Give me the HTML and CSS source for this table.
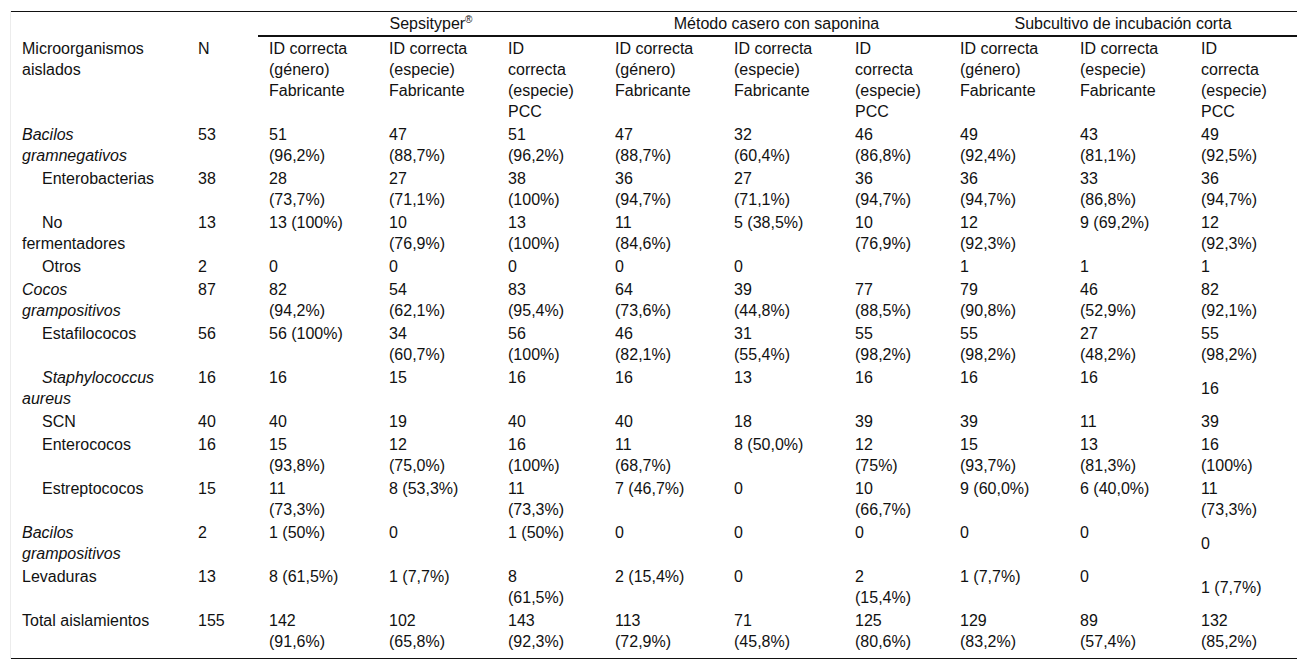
FILE: index.html
```html
<!DOCTYPE html>
<html lang="es">
<head>
<meta charset="utf-8">
<title>Tabla</title>
<link rel="stylesheet" href="styles.css">
</head>
<body>
<table class="tbl">
  <colgroup>
    <col class="c-name">
    <col class="c-n">
    <col class="c-a">
    <col class="c-b">
    <col class="c-c">
    <col class="c-d">
    <col class="c-e">
    <col class="c-f">
    <col class="c-g">
    <col class="c-h">
    <col class="c-i">
  </colgroup>
  <thead>
    <tr class="grp-row">
      <th></th>
      <th></th>
      <th class="grp" colspan="3">Sepsityper<sup>®</sup></th>
      <th class="grp" colspan="3">Método casero con saponina</th>
      <th class="grp" colspan="3">Subcultivo de incubación corta</th>
    </tr>
    <tr>
      <th>Microorganismos<br>aislados</th>
      <th>N</th>
      <th>ID correcta<br>(género)<br>Fabricante</th>
      <th>ID correcta<br>(especie)<br>Fabricante</th>
      <th>ID<br>correcta<br>(especie)<br>PCC</th>
      <th>ID correcta<br>(género)<br>Fabricante</th>
      <th>ID correcta<br>(especie)<br>Fabricante</th>
      <th>ID<br>correcta<br>(especie)<br>PCC</th>
      <th>ID correcta<br>(género)<br>Fabricante</th>
      <th>ID correcta<br>(especie)<br>Fabricante</th>
      <th>ID<br>correcta<br>(especie)<br>PCC</th>
    </tr>
  </thead>
  <tbody>
    <tr>
      <td class="it">Bacilos<br>gramnegativos</td>
      <td>53</td>
      <td>51<br>(96,2%)</td><td>47<br>(88,7%)</td><td>51<br>(96,2%)</td>
      <td>47<br>(88,7%)</td><td>32<br>(60,4%)</td><td>46<br>(86,8%)</td>
      <td>49<br>(92,4%)</td><td>43<br>(81,1%)</td><td>49<br>(92,5%)</td>
    </tr>
    <tr>
      <td><span class="ind">Enterobacterias</span></td>
      <td>38</td>
      <td>28<br>(73,7%)</td><td>27<br>(71,1%)</td><td>38<br>(100%)</td>
      <td>36<br>(94,7%)</td><td>27<br>(71,1%)</td><td>36<br>(94,7%)</td>
      <td>36<br>(94,7%)</td><td>33<br>(86,8%)</td><td>36<br>(94,7%)</td>
    </tr>
    <tr>
      <td><span class="ind">No</span><br>fermentadores</td>
      <td>13</td>
      <td>13 (100%)</td><td>10<br>(76,9%)</td><td>13<br>(100%)</td>
      <td>11<br>(84,6%)</td><td>5 (38,5%)</td><td>10<br>(76,9%)</td>
      <td>12<br>(92,3%)</td><td>9 (69,2%)</td><td>12<br>(92,3%)</td>
    </tr>
    <tr>
      <td><span class="ind">Otros</span></td>
      <td>2</td>
      <td>0</td><td>0</td><td>0</td>
      <td>0</td><td>0</td><td></td>
      <td>1</td><td>1</td><td>1</td>
    </tr>
    <tr>
      <td class="it">Cocos<br>grampositivos</td>
      <td>87</td>
      <td>82<br>(94,2%)</td><td>54<br>(62,1%)</td><td>83<br>(95,4%)</td>
      <td>64<br>(73,6%)</td><td>39<br>(44,8%)</td><td>77<br>(88,5%)</td>
      <td>79<br>(90,8%)</td><td>46<br>(52,9%)</td><td>82<br>(92,1%)</td>
    </tr>
    <tr>
      <td><span class="ind">Estafilococos</span></td>
      <td>56</td>
      <td>56 (100%)</td><td>34<br>(60,7%)</td><td>56<br>(100%)</td>
      <td>46<br>(82,1%)</td><td>31<br>(55,4%)</td><td>55<br>(98,2%)</td>
      <td>55<br>(98,2%)</td><td>27<br>(48,2%)</td><td>55<br>(98,2%)</td>
    </tr>
    <tr>
      <td class="it"><span class="ind">Staphylococcus</span><br>aureus</td>
      <td>16</td>
      <td>16</td><td>15</td><td>16</td>
      <td>16</td><td>13</td><td>16</td>
      <td>16</td><td>16</td><td class="mid">16</td>
    </tr>
    <tr>
      <td><span class="ind">SCN</span></td>
      <td>40</td>
      <td>40</td><td>19</td><td>40</td>
      <td>40</td><td>18</td><td>39</td>
      <td>39</td><td>11</td><td>39</td>
    </tr>
    <tr>
      <td><span class="ind">Enterococos</span></td>
      <td>16</td>
      <td>15<br>(93,8%)</td><td>12<br>(75,0%)</td><td>16<br>(100%)</td>
      <td>11<br>(68,7%)</td><td>8 (50,0%)</td><td>12<br>(75%)</td>
      <td>15<br>(93,7%)</td><td>13<br>(81,3%)</td><td>16<br>(100%)</td>
    </tr>
    <tr>
      <td><span class="ind">Estreptococos</span></td>
      <td>15</td>
      <td>11<br>(73,3%)</td><td>8 (53,3%)</td><td>11<br>(73,3%)</td>
      <td>7 (46,7%)</td><td>0</td><td>10<br>(66,7%)</td>
      <td>9 (60,0%)</td><td>6 (40,0%)</td><td>11<br>(73,3%)</td>
    </tr>
    <tr>
      <td class="it">Bacilos<br>grampositivos</td>
      <td>2</td>
      <td>1 (50%)</td><td>0</td><td>1 (50%)</td>
      <td>0</td><td>0</td><td>0</td>
      <td>0</td><td>0</td><td class="mid">0</td>
    </tr>
    <tr>
      <td>Levaduras</td>
      <td>13</td>
      <td>8 (61,5%)</td><td>1 (7,7%)</td><td>8<br>(61,5%)</td>
      <td>2 (15,4%)</td><td>0</td><td>2<br>(15,4%)</td>
      <td>1 (7,7%)</td><td>0</td><td class="mid">1 (7,7%)</td>
    </tr>
    <tr class="last">
      <td>Total aislamientos</td>
      <td>155</td>
      <td>142<br>(91,6%)</td><td>102<br>(65,8%)</td><td>143<br>(92,3%)</td>
      <td>113<br>(72,9%)</td><td>71<br>(45,8%)</td><td>125<br>(80,6%)</td>
      <td>129<br>(83,2%)</td><td>89<br>(57,4%)</td><td>132<br>(85,2%)</td>
    </tr>
  </tbody>
</table>
</body>
</html>
```
FILE: styles.css
```css
html, body {
  margin: 0;
  padding: 0;
  background: #fff;
}

body {
  font-family: "Liberation Sans", Arial, sans-serif;
  font-size: 16px;
  line-height: 21px;
  color: #111;
}

.tbl {
  margin: 11px 0 0 10px;
  width: 1287px;
  table-layout: fixed;
  border-collapse: separate;
  border-spacing: 0;
  border-left: 1px solid #ececec;
}

.c-name { width: 176px; }
.c-n { width: 71px; }
.c-a { width: 120px; }
.c-b { width: 119px; }
.c-c { width: 107px; }
.c-d { width: 119px; }
.c-e { width: 121px; }
.c-f { width: 105px; }
.c-g { width: 120px; }
.c-h { width: 121px; }
.c-i { width: 107px; }

.tbl th,
.tbl td {
  text-align: left;
  vertical-align: top;
  font-weight: normal;
  padding: 1px 0 1px 11px;
  white-space: nowrap;
}

.grp-row th {
  border-top: 1px solid #111;
}

.tbl th.grp {
  text-align: center;
  padding-left: 0;
  border-bottom: 2px solid #111;
}

.tbl th.grp sup {
  font-size: 10px;
  line-height: 0;
  vertical-align: 6px;
}

.it {
  font-style: italic;
}

.ind {
  padding-left: 20px;
}

.tbl td.mid {
  vertical-align: middle;
}

.last td {
  padding-bottom: 6px;
  border-bottom: 1px solid #111;
}
```
